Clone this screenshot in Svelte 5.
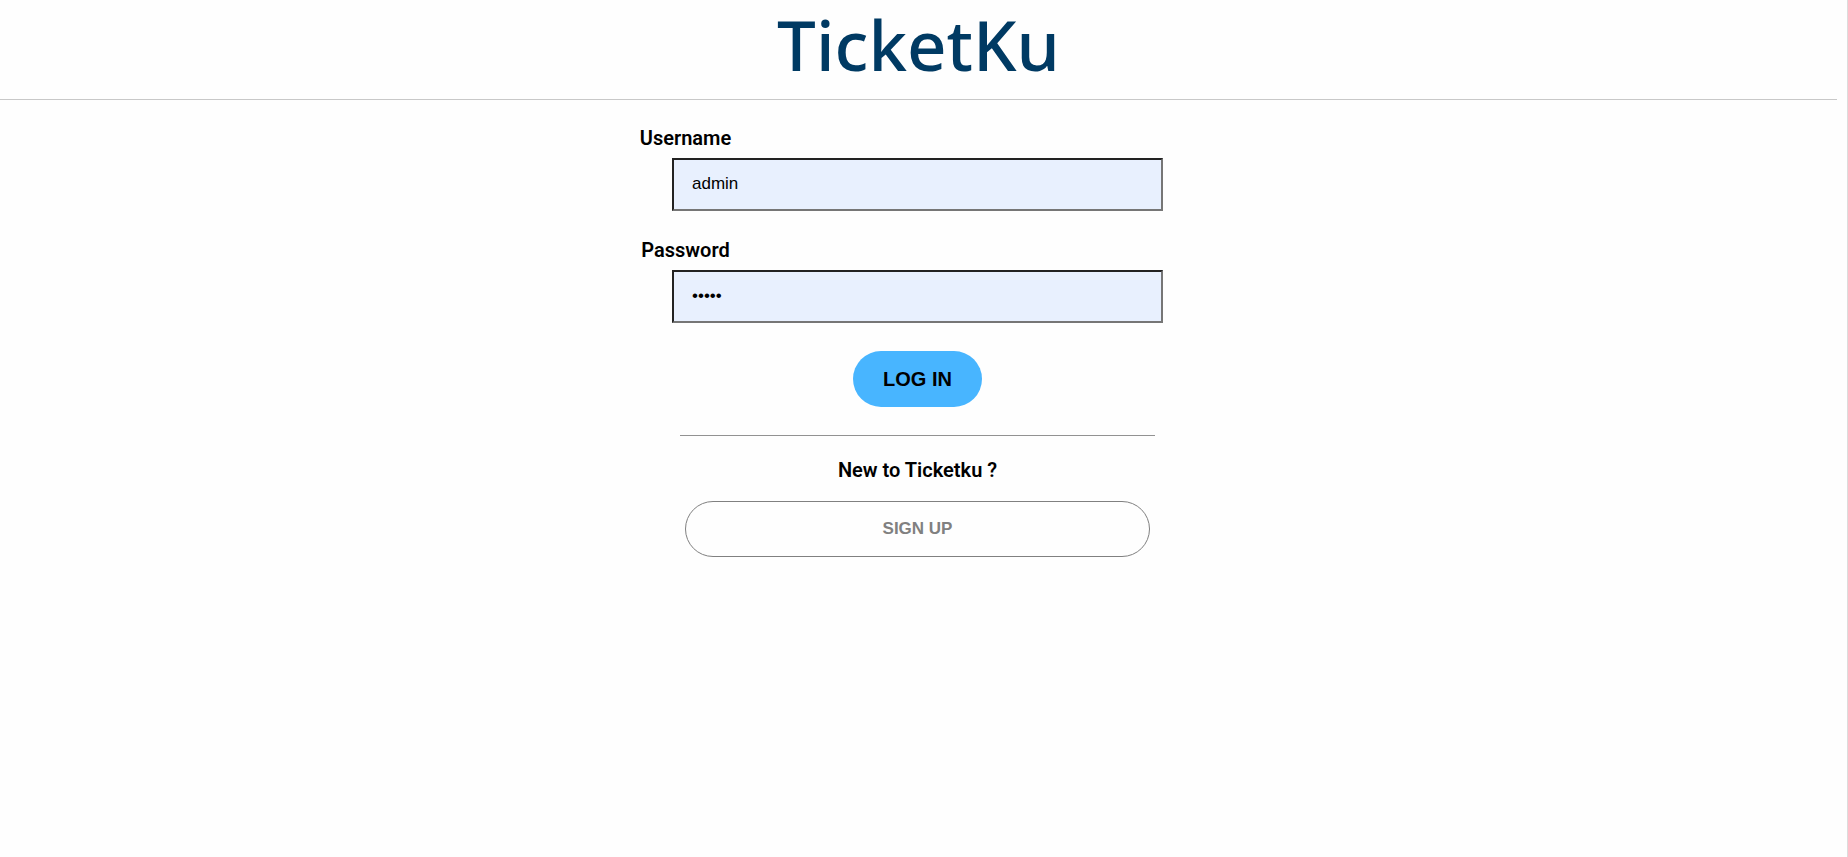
<script>
  let username = $state('admin');
  let password = $state('admin');
</script>

<div class="page">
  <header>
    <h1>TicketKu</h1>
  </header>
  <main>
    <form onsubmit={(e) => e.preventDefault()}>
      <div class="field">
        <label for="username">Username</label>
        <input id="username" type="text" bind:value={username} />
      </div>
      <div class="field">
        <label for="password">Password</label>
        <input id="password" type="password" bind:value={password} />
      </div>
      <button class="login" type="submit">LOG IN</button>
      <hr />
      <p>New to Ticketku ?</p>
      <button class="signup" type="button">SIGN UP</button>
    </form>
  </main>
</div>

<style>
  :global(body) {
    margin: 0;
    background: #fefefe;
  }
  .page {
    box-sizing: border-box;
    min-height: 100vh;
    padding-right: 10px;
    border-right: 1px solid #dcdcdc;
    font-family: Roboto, sans-serif;
    color: #000;
  }
  header {
    border-bottom: 1px solid #c8c8c8;
    padding-bottom: 11px;
  }
  h1 {
    margin: 0;
    font: 500 69px/88px "Noto Sans", sans-serif;
    color: #003a63;
    text-align: center;
  }
  main {
    display: flex;
    justify-content: center;
    padding: 24px 2px 24px 0;
  }
  form {
    display: flex;
    flex-direction: column;
    align-items: center;
    width: 100%;
    max-width: 558px;
  }
  .field {
    display: flex;
    flex-direction: column;
    align-items: center;
    width: 100%;
  }
  .field + .field {
    margin-top: 25px;
  }
  label,
  p {
    font-size: 20px;
    font-weight: 600;
    line-height: 28px;
    text-align: center;
  }
  label {
    align-self: flex-start;
    width: 94px;
    margin-bottom: 6px;
  }
  input {
    box-sizing: border-box;
    width: 88%;
    height: 53px;
    padding: 0 18px 2px;
    border: 2px solid;
    border-color: #222 #767676 #767676 #222;
    border-radius: 0;
    background: #e8f0fe;
    color: #000;
    font: 17px "Liberation Sans", Arial, sans-serif;
  }
  button {
    height: 56px;
    border-radius: 28px;
    font-family: "Liberation Sans", Arial, sans-serif;
    font-weight: 700;
    cursor: pointer;
  }
  .login {
    margin-top: 28px;
    padding: 0 30px;
    border: 0;
    background: #48b5ff;
    color: #000;
    font-size: 20px;
  }
  hr {
    box-sizing: border-box;
    width: 85%;
    height: 1px;
    margin: 28px 0 20px;
    border: 0;
    background: #929292;
  }
  p {
    margin: 0 0 17px;
  }
  .signup {
    width: 465px;
    max-width: 100%;
    border: 1px solid #808080;
    background: transparent;
    color: #808080;
    font-size: 17px;
  }
</style>
